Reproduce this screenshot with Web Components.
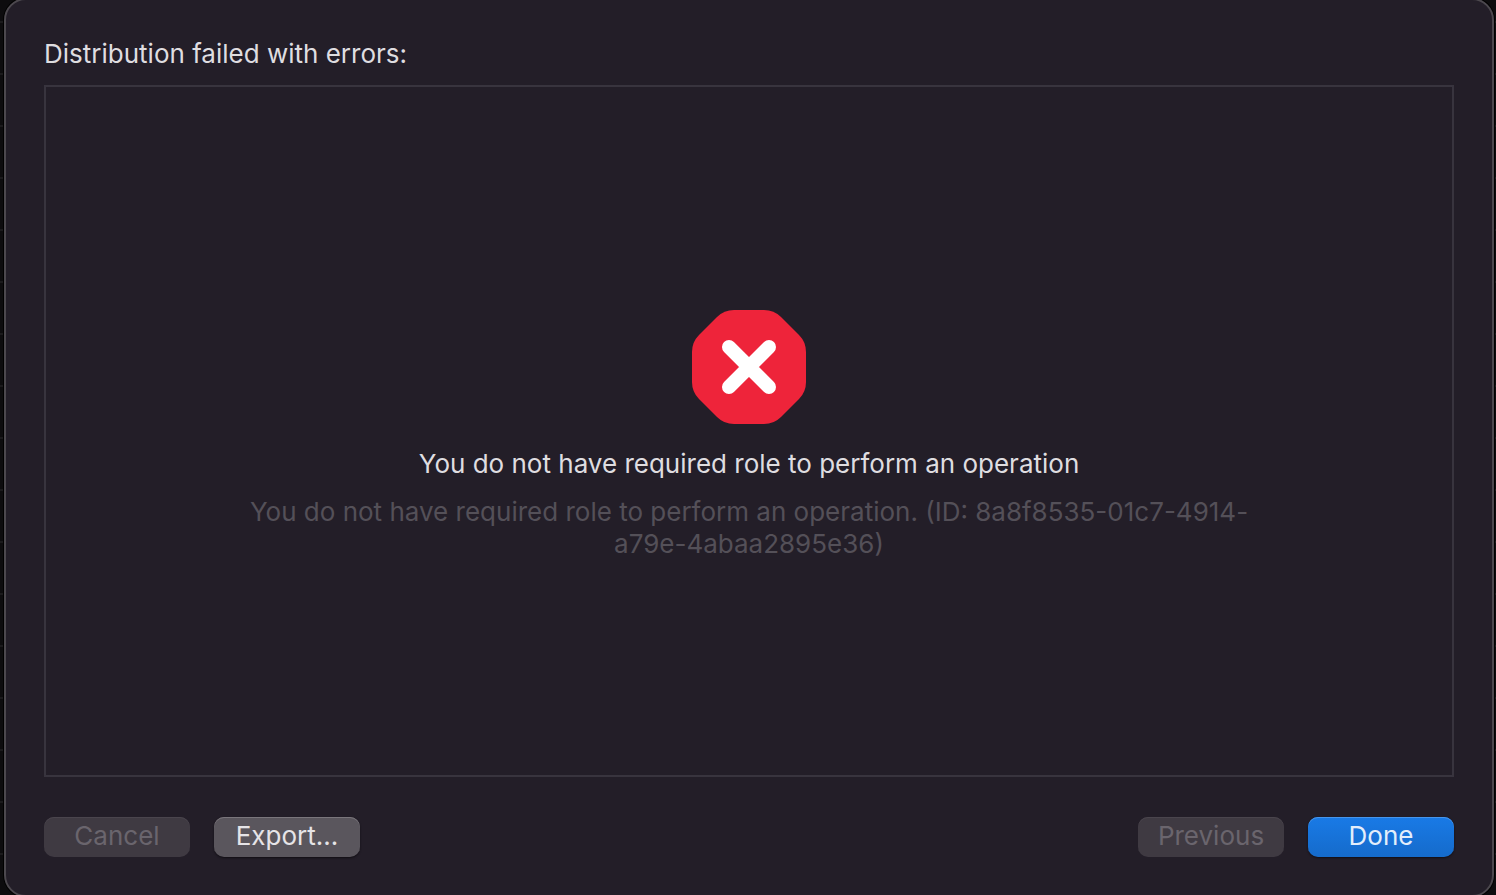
<!DOCTYPE html>
<html lang="en">
<head>
<meta charset="utf-8">
<title>Distribution failed</title>
<style>
html, body { margin: 0; height: 100%; }
body { background: #0d0c0e; font-family: Inter, "Liberation Sans", sans-serif; font-size: 26px; line-height: 32px; color: #dfdde0; overflow: hidden; }
</style>
</head>
<body>
<error-sheet>
  <span slot="title">Distribution failed with errors:</span>
  <error-message>
    <span slot="summary">You do not have required role to perform an operation</span>
    <span slot="detail">You do not have required role to perform an operation. (ID: 8a8f8535-01c7-4914-a79e-4abaa2895e36)</span>
  </error-message>
  <push-button slot="leading" disabled>Cancel</push-button>
  <push-button slot="leading">Export...</push-button>
  <push-button slot="trailing" disabled>Previous</push-button>
  <push-button slot="trailing" variant="primary">Done</push-button>
</error-sheet>

<template id="error-sheet">
  <style>
    :host { display: flex; flex-direction: column; box-sizing: border-box; height: 100vh; padding: 0 2px 0 4px; overflow: hidden; background: repeating-linear-gradient(#0d0c0e 0 21px, #1b1a1c 21px 23px, #0d0c0e 23px 52px); }
    section { flex: 1; display: flex; flex-direction: column; margin: -2px 0; padding: 38px; border: 2px solid #4c484e; border-radius: 22px; background: #231e28; box-shadow: 0 0 0 1px #000; }
    h1 { margin: 0 0 15px; font: inherit; }
    main { flex: 1; display: flex; align-items: center; justify-content: center; padding-top: 7px; border: 2px solid #38343e; }
    footer { display: flex; justify-content: space-between; margin-top: 40px; }
    footer div { display: flex; gap: 24px; }
  </style>
  <section role="dialog" aria-labelledby="heading">
    <h1 id="heading"><slot name="title"></slot></h1>
    <main><slot></slot></main>
    <footer>
      <div><slot name="leading"></slot></div>
      <div><slot name="trailing"></slot></div>
    </footer>
  </section>
</template>

<template id="error-message">
  <style>
    :host { display: flex; flex-direction: column; align-items: center; box-sizing: border-box; width: 1000px; max-width: 100%; text-align: center; }
    svg { display: block; width: 114px; height: 114px; margin-bottom: 24px; }
    p { margin: 0; }
    p + p { margin-top: 16px; color: #545058; }
  </style>
  <svg viewBox="0 0 114 114" aria-hidden="true">
    <path fill="#ee243a" d="M42 0H72Q82 0 89 7L107 25Q114 32 114 42V72Q114 82 107 89L89 107Q82 114 72 114H42Q32 114 25 107L7 89Q0 82 0 72V42Q0 32 7 25L25 7Q32 0 42 0Z"/>
    <path fill="none" stroke="#fff" stroke-width="14" stroke-linecap="round" d="M37 37 77 77M77 37 37 77"/>
  </svg>
  <p><slot name="summary"></slot></p>
  <p><slot name="detail"></slot></p>
</template>

<template id="push-button">
  <style>
    :host { display: block; }
    button { display: block; box-sizing: border-box; width: 146px; height: 40px; margin: 0; padding: 0 0 2px; border: 0; border-radius: 10px; font: inherit; color: #e6e4e7; background: #5a565d; box-shadow: inset 0 1px #7a767c, 0 1px 2px #110e14; }
    button:disabled { color: #6a656d; background: #3f3a42; box-shadow: inset 0 1px #4a454d; }
    :host([variant="primary"]) button { color: #e3eefb; background: linear-gradient(#197ae6, #156bcb); box-shadow: inset 0 1px #4796ec, 0 1px 2px #110e14; }
  </style>
  <button type="button"><slot></slot></button>
</template>

<script>
const stamp = (host, id) => host.attachShadow({ mode: "open" })
  .append(document.getElementById(id).content.cloneNode(true));

class ErrorSheet extends HTMLElement {
  constructor() { super(); stamp(this, "error-sheet"); }
}
class ErrorMessage extends HTMLElement {
  constructor() { super(); stamp(this, "error-message"); }
}
class PushButton extends HTMLElement {
  static observedAttributes = ["disabled"];
  constructor() { super(); stamp(this, "push-button"); }
  attributeChangedCallback() {
    this.shadowRoot.querySelector("button").disabled = this.hasAttribute("disabled");
  }
}
customElements.define("error-sheet", ErrorSheet);
customElements.define("error-message", ErrorMessage);
customElements.define("push-button", PushButton);
</script>
</body>
</html>
